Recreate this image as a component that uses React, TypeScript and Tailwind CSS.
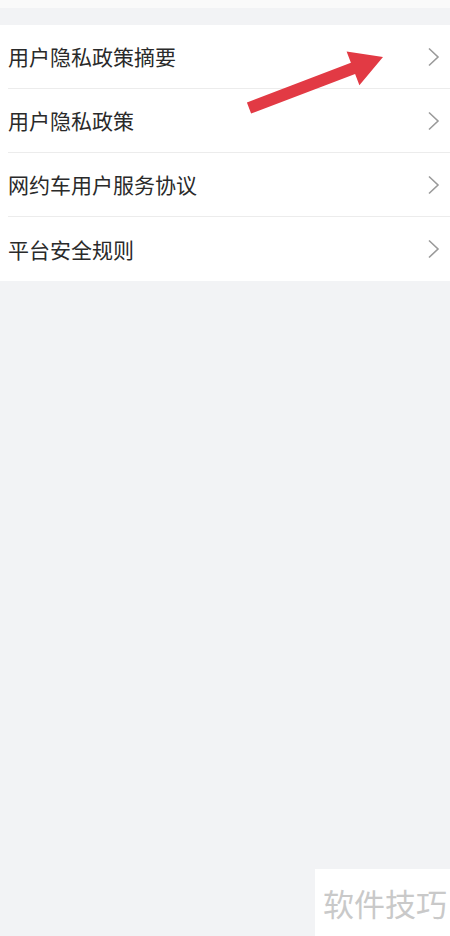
const ITEMS = ["用户隐私政策摘要", "用户隐私政策", "网约车用户服务协议", "平台安全规则"];

const FONT = { fontFamily: '"Noto Sans CJK SC", "Noto Sans", sans-serif' };

function Chevron() {
  return (
    <svg width="13" height="20" viewBox="0 0 13 20" className="shrink-0">
      <polyline points="2,1.5 11,10 2,18.5" fill="none" stroke="#9a9a9a" strokeWidth="1.6" />
    </svg>
  );
}

function Row({ label, last }: { label: string; last: boolean }) {
  return (
    <div className="flex h-[64px] items-center pl-2">
      <div
        className={`flex h-full flex-1 items-center justify-between pr-[10px] ${
          last ? "" : "border-b border-[#ececec]"
        }`}
      >
        <span className="text-[21px] leading-none text-[#2a2a2a]">{label}</span>
        <Chevron />
      </div>
    </div>
  );
}

export default function App() {
  return (
    <div className="relative flex h-[936px] w-[450px] flex-col bg-[#f2f3f5]" style={FONT}>
      <div className="h-2 bg-[#fafafa]" />
      <div className="h-[17px]" />
      <div className="bg-white">
        {ITEMS.map((label, i) => (
          <Row key={label} label={label} last={i === ITEMS.length - 1} />
        ))}
      </div>

      {/* red annotation arrow */}
      <svg className="absolute left-[240px] top-[40px]" width="150" height="80" viewBox="0 0 150 80">
        <polygon
          points="6.9,62.4 110.9,22.8 106.6,11.5 143,17 119.4,45.3 115.1,34 11.1,73.6"
          fill="#e23a44"
        />
      </svg>

      <div className="flex-1" />
      <div className="flex h-[67px] w-[135px] items-center justify-end self-end bg-white pr-[3px]">
        <span className="whitespace-nowrap text-[31px] leading-none text-[#c9c9c9]">软件技巧</span>
      </div>
    </div>
  );
}
